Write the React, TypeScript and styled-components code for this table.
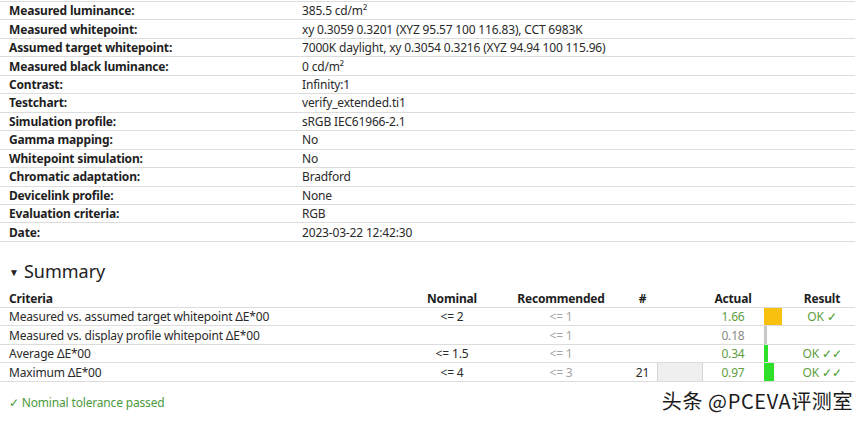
import React from "react";
import styled, { createGlobalStyle } from "styled-components";

const GlobalStyle = createGlobalStyle`
  html, body {
    margin: 0;
    padding: 0;
    background: #fff;
  }
  body {
    font-family: "Noto Sans", "Open Sans", sans-serif;
    color: #222;
    font-size: 12px;
    letter-spacing: -0.17px;
  }
`;

const Page = styled.div`
  position: relative;
  width: 866px;
  height: 424px;
  overflow: hidden;
  background: #fff;
`;

const InfoTable = styled.div`
  width: 855px;
  margin-top: 1px;
  border-top: 1px solid #dcdcdc;
`;

const InfoRow = styled.div`
  display: grid;
  grid-template-columns: 300px 1fr;
  height: 17.46px;
  align-items: center;
  border-bottom: 1px solid #dcdcdc;
`;

const Label = styled.div`
  padding-left: 9px;
  font-weight: 700;
  color: #1e1e1e;
  white-space: nowrap;
`;

const Value = styled.div`
  padding-left: 2px;
  color: #2a2a2a;
  white-space: nowrap;
`;

const Heading = styled.h2`
  display: flex;
  align-items: center;
  gap: 5px;
  margin: 0;
  padding: 17px 0 0 9px;
  height: 25px;
  font-size: 18px;
  font-weight: 400;
  letter-spacing: 0;
  color: #222;
`;

const Caret = styled.span`
  font-size: 10px;
  line-height: 1;
  margin-top: 1px;
`;

const SummaryTable = styled.div`
  width: 855px;
  margin-top: 6px;
`;

const SumRow = styled.div<{ $head?: boolean }>`
  display: grid;
  grid-template-columns: 410px 84px 134px 29px 46px 60px 26px 66px;
  height: ${(p) => (p.$head ? "17px" : "17.5px")};
  align-items: center;
  border-bottom: 1px solid #dcdcdc;
  font-weight: ${(p) => (p.$head ? 700 : 400)};
  color: ${(p) => (p.$head ? "#1e1e1e" : "#2a2a2a")};
`;

const Cell = styled.div<{ $align?: "left" | "center"; $tone?: string }>`
  padding-left: ${(p) => (p.$align === "left" ? "9px" : "0")};
  text-align: ${(p) => p.$align || "center"};
  color: ${(p) => p.$tone || "inherit"};
  white-space: nowrap;
`;

const Swatch = styled.div<{ $show?: boolean }>`
  align-self: stretch;
  box-sizing: border-box;
  background: ${(p) => (p.$show ? "#efefef" : "transparent")};
  border-left: ${(p) => (p.$show ? "1px solid #d6d6d6" : "none")};
  border-right: ${(p) => (p.$show ? "1px solid #d6d6d6" : "none")};
`;

const BarCell = styled.div`
  align-self: stretch;
  padding-left: 1px;
  display: flex;
`;

const Bar = styled.div<{ $color: string }>`
  height: 100%;
  background: ${(p) => p.$color};
`;

const Checks = styled.span`
  color: #3f9a22;
`;

const Footer = styled.div`
  padding: 12px 0 0 9px;
  color: #4b9a3c;
`;

const Watermark = styled.div`
  position: absolute;
  right: 13px;
  bottom: 9px;
  font-family: "Noto Sans CJK SC", "Liberation Sans", sans-serif;
  font-size: 20px;
  letter-spacing: 0.6px;
  color: #1a1a1a;
  text-shadow: 0 0 2px #fff, 0 0 1px #fff, 1px 1px 0 #fff;
`;

const info: [string, string][] = [
  ["Measured luminance:", "385.5 cd/m²"],
  ["Measured whitepoint:", "xy 0.3059 0.3201 (XYZ 95.57 100 116.83), CCT 6983K"],
  ["Assumed target whitepoint:", "7000K daylight, xy 0.3054 0.3216 (XYZ 94.94 100 115.96)"],
  ["Measured black luminance:", "0 cd/m²"],
  ["Contrast:", "Infinity:1"],
  ["Testchart:", "verify_extended.ti1"],
  ["Simulation profile:", "sRGB IEC61966-2.1"],
  ["Gamma mapping:", "No"],
  ["Whitepoint simulation:", "No"],
  ["Chromatic adaptation:", "Bradford"],
  ["Devicelink profile:", "None"],
  ["Evaluation criteria:", "RGB"],
  ["Date:", "2023-03-22 12:42:30"],
];

type Row = {
  criteria: string;
  nominal: string;
  recommended: string;
  count: string;
  actual: string;
  actualTone: string;
  bar: number;
  barColor: string;
  checks: string;
};

const rows: Row[] = [
  {
    criteria: "Measured vs. assumed target whitepoint ΔE*00",
    nominal: "<= 2",
    recommended: "<= 1",
    count: "",
    actual: "1.66",
    actualTone: "#5e9e3e",
    bar: 18,
    barColor: "#f8c110",
    checks: "✓",
  },
  {
    criteria: "Measured vs. display profile whitepoint ΔE*00",
    nominal: "",
    recommended: "<= 1",
    count: "",
    actual: "0.18",
    actualTone: "#8a8a8a",
    bar: 3,
    barColor: "#c8c8c8",
    checks: "",
  },
  {
    criteria: "Average ΔE*00",
    nominal: "<= 1.5",
    recommended: "<= 1",
    count: "",
    actual: "0.34",
    actualTone: "#5e9e3e",
    bar: 4,
    barColor: "#2ee02a",
    checks: "✓✓",
  },
  {
    criteria: "Maximum ΔE*00",
    nominal: "<= 4",
    recommended: "<= 3",
    count: "21",
    actual: "0.97",
    actualTone: "#5e9e3e",
    bar: 10,
    barColor: "#2ee02a",
    checks: "✓✓",
  },
];

const App = () => {
  return (
    <Page>
      <GlobalStyle />
      <InfoTable>
        {info.map(([label, value]) => (
          <InfoRow key={label}>
            <Label>{label}</Label>
            <Value>{value}</Value>
          </InfoRow>
        ))}
      </InfoTable>

      <Heading>
        <Caret>▼</Caret>
        Summary
      </Heading>

      <SummaryTable>
        <SumRow $head>
          <Cell $align="left">Criteria</Cell>
          <Cell>Nominal</Cell>
          <Cell>Recommended</Cell>
          <Cell>#</Cell>
          <div />
          <Cell>Actual</Cell>
          <div />
          <Cell>Result</Cell>
        </SumRow>
        {rows.map((r) => (
          <SumRow key={r.criteria}>
            <Cell $align="left">{r.criteria}</Cell>
            <Cell>{r.nominal}</Cell>
            <Cell $tone="#a3a3a3">{r.recommended}</Cell>
            <Cell>{r.count}</Cell>
            <Swatch $show={r.count !== ""} />
            <Cell $tone={r.actualTone}>{r.actual}</Cell>
            <BarCell>
              <Bar $color={r.barColor} style={{ width: r.bar }} />
            </BarCell>
            <Cell $tone="#5e9e3e">
              {r.checks && (
                <>
                  OK <Checks>{r.checks}</Checks>
                </>
              )}
            </Cell>
          </SumRow>
        ))}
      </SummaryTable>

      <Footer>✓ Nominal tolerance passed</Footer>

      <Watermark>头条 @PCEVA评测室</Watermark>
    </Page>
  );
};

export default App;
